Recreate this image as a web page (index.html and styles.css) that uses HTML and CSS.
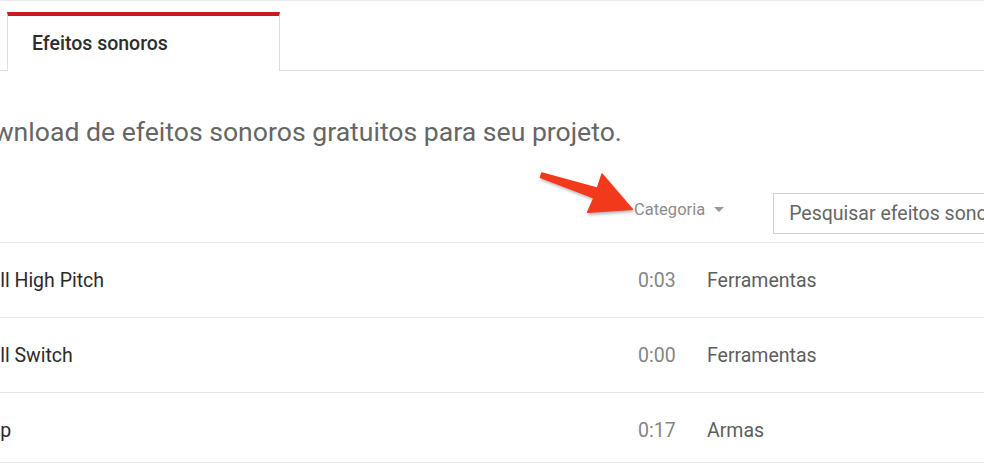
FILE: index.html
```html
<!DOCTYPE html>
<html lang="pt">
<head>
<meta charset="utf-8">
<title>Biblioteca de áudio - Efeitos sonoros</title>
<link rel="stylesheet" href="styles.css">
</head>
<body>
<div class="page">
  <nav class="tabs">
    <div class="tab-gap"></div>
    <div class="tab active">Efeitos sonoros</div>
    <div class="tab-fill"></div>
  </nav>
  <main class="main">
    <p class="subtitle">Faça o download de efeitos sonoros gratuitos para seu projeto.</p>
    <div class="toolbar">
      <div class="category">Categoria <span class="caret"></span></div>
      <input class="search" type="text" placeholder="Pesquisar efeitos sonoros">
    </div>
    <div class="list">
      <div class="row">
        <span class="name">Drill High Pitch</span>
        <span class="dur">0:03</span>
        <span class="cat">Ferramentas</span>
      </div>
      <div class="row">
        <span class="name">Drill Switch</span>
        <span class="dur">0:00</span>
        <span class="cat">Ferramentas</span>
      </div>
      <div class="row">
        <span class="name">Drip</span>
        <span class="dur">0:17</span>
        <span class="cat">Armas</span>
      </div>
    </div>
  </main>
  <svg class="arrow" viewBox="0 0 984 464" width="984" height="464" aria-hidden="true">
    <path d="M541.7,172.8 L597.3,188.1 L602,173.8 L632.5,209.5 L587.5,212.3 L593.8,198 L540.3,177.4 Z" fill="#f2391c" stroke="#f2391c" stroke-width="1.2" stroke-linejoin="round"/>
  </svg>
</div>
</body>
</html>
```

FILE: styles.css
```css
html, body {
  margin: 0;
  padding: 0;
  background: #fff;
}
body {
  font-family: "Roboto", "Liberation Sans", Arial, sans-serif;
  overflow: hidden;
  width: 984px;
  height: 464px;
}
.page {
  position: relative;
  height: 461px;
  overflow: hidden;
  border-top: 1px solid #ebebeb;
  border-bottom: 1px solid #e6e6e6;
}
.tabs {
  display: flex;
  padding-top: 11px;
}
.tab-gap {
  width: 7px;
  border-bottom: 1px solid #dedede;
}
.tab {
  box-sizing: border-box;
  width: 273px;
  height: 59px;
  border-left: 1px solid #dedede;
  border-right: 1px solid #dedede;
  border-top: 4px solid #cc181e;
  padding-left: 24px;
  display: flex;
  align-items: center;
  font-size: 19.5px;
  font-weight: 500;
  color: #2e2e2e;
  background: #fff;
}
.tab-fill {
  flex: 1;
  border-bottom: 1px solid #dedede;
}
.main {
  margin-left: -122px;
}
.subtitle {
  margin: 45px 0 0;
  font-size: 26.6px;
  line-height: 32px;
  color: #666;
  white-space: nowrap;
}
.toolbar {
  display: flex;
  align-items: center;
  margin-top: 45px;
  padding-left: 756px;
  height: 41px;
}
.category {
  display: flex;
  align-items: center;
  font-size: 16.5px;
  line-height: 20px;
  color: #8c8c8c;
  margin-bottom: 8px;
  white-space: nowrap;
}
.caret {
  width: 0;
  height: 0;
  margin-left: 9px;
  border-left: 5px solid transparent;
  border-right: 5px solid transparent;
  border-top: 5px solid #9a9a9a;
}
.search {
  box-sizing: border-box;
  flex: none;
  width: 320px;
  height: 41px;
  margin-left: 49px;
  padding: 0 0 0 15px;
  border: 1px solid #d3d3d3;
  border-radius: 0;
  outline: none;
  font-family: "Roboto", "Liberation Sans", Arial, sans-serif;
  font-size: 19.5px;
  color: #333;
  background: #fff;
}
.search::placeholder {
  color: #666;
  opacity: 1;
}
.list {
  margin-top: 8px;
  border-top: 1px solid #e6e6e6;
}
.row {
  display: grid;
  grid-template-columns: 662px 69px 1fr;
  align-items: center;
  height: 74px;
  padding-left: 98px;
  border-bottom: 1px solid #e6e6e6;
  font-size: 19.5px;
  white-space: nowrap;
}
.name {
  color: #2b2b2b;
}
.dur {
  color: #858585;
}
.cat {
  color: #5e5e5e;
}
.arrow {
  position: absolute;
  top: -1px;
  left: 0;
  pointer-events: none;
  filter: drop-shadow(1px 2px 1.5px rgba(0, 0, 0, 0.3));
}
```
